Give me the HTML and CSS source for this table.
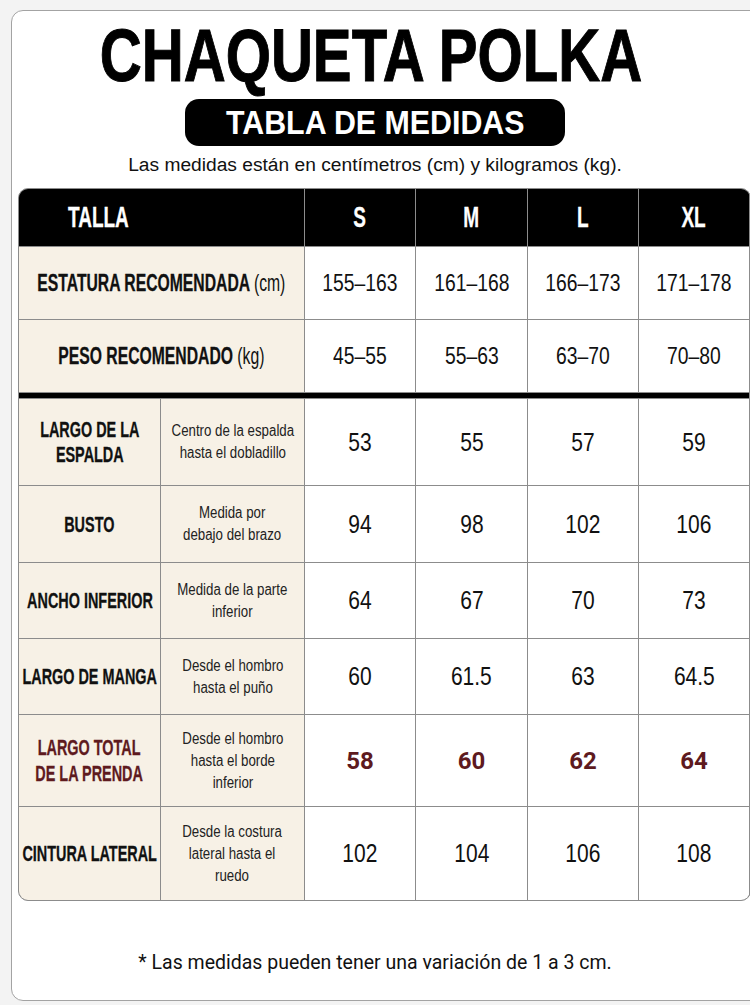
FILE: index.html
```html
<!DOCTYPE html>
<html lang="es">
<head>
<meta charset="utf-8">
<title>Chaqueta Polka - Tabla de medidas</title>
<link rel="stylesheet" href="styles.css">
</head>
<body>
<div class="card">
  <header class="intro">
    <h1 class="title"><span class="title-text">CHAQUETA POLKA</span></h1>
    <div class="pill"><span class="pill-text">TABLA DE MEDIDAS</span></div>
    <p class="sub">Las medidas están en centímetros (cm) y kilogramos (kg).</p>
  </header>

  <div class="chart">
    <div class="hd hd-label"><span class="sq sq-left">TALLA</span></div>
    <div class="hd"><span class="sq">S</span></div>
    <div class="hd"><span class="sq">M</span></div>
    <div class="hd"><span class="sq">L</span></div>
    <div class="hd"><span class="sq">XL</span></div>

    <div class="lab wide"><span class="sq">ESTATURA RECOMENDADA <span class="unit">(cm)</span></span></div>
    <div class="val range"><span class="num">155–163</span></div>
    <div class="val range"><span class="num">161–168</span></div>
    <div class="val range"><span class="num">166–173</span></div>
    <div class="val range"><span class="num">171–178</span></div>

    <div class="lab wide"><span class="sq">PESO RECOMENDADO <span class="unit">(kg)</span></span></div>
    <div class="val range"><span class="num">45–55</span></div>
    <div class="val range"><span class="num">55–63</span></div>
    <div class="val range"><span class="num">63–70</span></div>
    <div class="val range"><span class="num">70–80</span></div>

    <div class="bar"></div>

    <div class="lab name"><span class="sq">LARGO DE LA<br>ESPALDA</span></div>
    <div class="lab desc"><span class="dsc">Centro de la espalda<br>hasta el dobladillo</span></div>
    <div class="val"><span class="num">53</span></div>
    <div class="val"><span class="num">55</span></div>
    <div class="val"><span class="num">57</span></div>
    <div class="val"><span class="num">59</span></div>

    <div class="lab name"><span class="sq">BUSTO</span></div>
    <div class="lab desc"><span class="dsc">Medida por<br>debajo del brazo</span></div>
    <div class="val"><span class="num">94</span></div>
    <div class="val"><span class="num">98</span></div>
    <div class="val"><span class="num">102</span></div>
    <div class="val"><span class="num">106</span></div>

    <div class="lab name"><span class="sq">ANCHO INFERIOR</span></div>
    <div class="lab desc"><span class="dsc">Medida de la parte<br>inferior</span></div>
    <div class="val"><span class="num">64</span></div>
    <div class="val"><span class="num">67</span></div>
    <div class="val"><span class="num">70</span></div>
    <div class="val"><span class="num">73</span></div>

    <div class="lab name"><span class="sq">LARGO DE MANGA</span></div>
    <div class="lab desc"><span class="dsc">Desde el hombro<br>hasta el puño</span></div>
    <div class="val"><span class="num">60</span></div>
    <div class="val"><span class="num">61.5</span></div>
    <div class="val"><span class="num">63</span></div>
    <div class="val"><span class="num">64.5</span></div>

    <div class="lab name accent"><span class="sq">LARGO TOTAL<br>DE LA PRENDA</span></div>
    <div class="lab desc"><span class="dsc">Desde el hombro<br>hasta el borde<br>inferior</span></div>
    <div class="val accent"><span class="num-b">58</span></div>
    <div class="val accent"><span class="num-b">60</span></div>
    <div class="val accent"><span class="num-b">62</span></div>
    <div class="val accent"><span class="num-b">64</span></div>

    <div class="lab name"><span class="sq">CINTURA LATERAL</span></div>
    <div class="lab desc"><span class="dsc">Desde la costura<br>lateral hasta el<br>ruedo</span></div>
    <div class="val"><span class="num">102</span></div>
    <div class="val"><span class="num">104</span></div>
    <div class="val"><span class="num">106</span></div>
    <div class="val"><span class="num">108</span></div>
  </div>

  <p class="note">* Las medidas pueden tener una variación de 1 a 3 cm.</p>
</div>
</body>
</html>
```

FILE: styles.css
```css
:root {
  --sans: "Liberation Sans", Arial, sans-serif;
  --line: #8c8c8c;
  --beige: #f7f1e6;
  --ink: #111111;
  --accent: #5e1a1e;
  --sq-bold: 0.655;
  --sq-reg: 0.84;
}

html, body {
  margin: 0;
  padding: 0;
  overflow: hidden;
}

body {
  background: #f3f3f3;
  width: 750px;
  height: 1005px;
}

.card {
  box-sizing: border-box;
  margin: 10px 0 0 11px;
  width: 770px;
  height: 991px;
  background: #ffffff;
  border: 1px solid #a3a3a3;
  border-radius: 12px;
}

.intro {
  width: 726px;
  display: flex;
  flex-direction: column;
  align-items: center;
  text-align: center;
}

.title {
  margin: 7px 0 0;
  padding-right: 8px;
  font-family: var(--sans);
  font-weight: 700;
  font-size: 75px;
  line-height: 75px;
  color: #000;
  white-space: nowrap;
}

.title-text {
  display: inline-block;
  transform: scaleX(0.775);
  -webkit-text-stroke: 1px #000;
}

.pill {
  margin-top: 6px;
  width: 380px;
  height: 47px;
  border-radius: 14px;
  background: #000;
  color: #fff;
  font-family: var(--sans);
  font-weight: 700;
  font-size: 33px;
  line-height: 47px;
  white-space: nowrap;
  display: flex;
  justify-content: center;
}

.pill-text {
  display: inline-block;
  transform: scaleX(0.92);
}

.sub {
  margin: 7px 0 0;
  font-family: var(--sans);
  font-size: 19.2px;
  line-height: 24px;
  color: var(--ink);
}

.chart {
  margin: 11px 0 0 6px;
  width: 731px;
  display: grid;
  grid-template-columns: 141px 143px 110px 111px 110px 110px;
  grid-template-rows: 57px 72px 72px 5px 86px 76px 75px 75px 91px 93px;
  gap: 1px;
  background: var(--line);
  border: 1px solid var(--line);
  border-radius: 10px;
  overflow: hidden;
  font-family: var(--sans);
  color: var(--ink);
}

.hd {
  background: #000;
  color: #fff;
  font-weight: 700;
  font-size: 29px;
  display: flex;
  align-items: center;
  justify-content: center;
}

.hd-label {
  grid-column: span 2;
  justify-content: flex-start;
  padding-left: 49px;
}

.sq {
  display: inline-block;
  white-space: nowrap;
  transform: scaleX(var(--sq-bold));
  -webkit-text-stroke: 0.3px currentColor;
}

.sq-left {
  transform-origin: left center;
}

.lab {
  background: var(--beige);
  display: flex;
  align-items: center;
  justify-content: center;
  text-align: center;
}

.wide {
  grid-column: span 2;
  font-weight: 700;
  font-size: 24px;
}

.unit {
  font-weight: 400;
  -webkit-text-stroke: 0;
}

.name {
  font-weight: 700;
  font-size: 22px;
  line-height: 25px;
}

.name.accent {
  line-height: 26px;
}

.desc {
  font-size: 16px;
  line-height: 22px;
  color: #222;
}

.dsc {
  display: inline-block;
  white-space: nowrap;
  transform: scaleX(0.83);
}

.val {
  background: #ffffff;
  display: flex;
  align-items: center;
  justify-content: center;
  font-size: 25px;
}

.val.range {
  font-size: 23px;
}

.num {
  display: inline-block;
  white-space: nowrap;
  transform: scaleX(var(--sq-reg));
}

.accent {
  color: var(--accent);
}

.val.accent {
  font-family: Roboto, "Liberation Sans", sans-serif;
  font-weight: 700;
  font-size: 24px;
}

.num-b {
  display: inline-block;
}

.bar {
  grid-column: 1 / -1;
  background: #000;
}

.note {
  width: 726px;
  margin: 50px 0 0;
  text-align: center;
  font-family: Roboto, "Liberation Sans", sans-serif;
  font-size: 19.5px;
  line-height: 24px;
  color: var(--ink);
}
```
